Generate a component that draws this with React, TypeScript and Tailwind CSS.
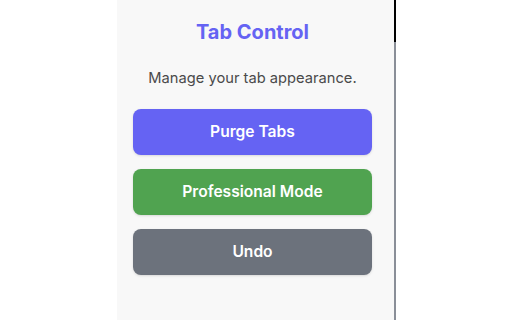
import React from 'react';

const buttons = [
    { label: 'Purge Tabs', className: 'bg-[#6563f3]' },
    { label: 'Professional Mode', className: 'bg-[#50a350]' },
    { label: 'Undo', className: 'bg-[#6c727c]' },
];

export default function App() {
    return (
        <div
            className="flex w-[512px] h-[320px] bg-white overflow-hidden"
            style={{ fontFamily: 'Inter, "Noto Sans", sans-serif' }}
        >
            <div className="w-[117px] shrink-0" />
            <div className="w-[277px] shrink-0 bg-[#f8f8f8] flex flex-col">
                <div className="w-[239px] ml-[16px] flex flex-col items-center">
                    <h1 className="mt-[19px] text-[20px] leading-[26px] font-bold text-[#6563f3]">
                        Tab Control
                    </h1>
                    <p className="mt-[23px] text-[14.7px] leading-[20px] text-[#4a4a4a]">
                        Manage your tab appearance.
                    </p>
                    <div className="mt-[21px] w-full flex flex-col gap-[14px]">
                        {buttons.map((b) => (
                            <button
                                key={b.label}
                                className={`h-[46px] w-full rounded-lg text-white text-[15.6px] font-semibold shadow-sm ${b.className}`}
                            >
                                {b.label}
                            </button>
                        ))}
                    </div>
                </div>
            </div>
            <div className="w-[2px] shrink-0 flex flex-col">
                <div className="h-[42px] bg-black" />
                <div className="flex-1 bg-[#8a8f98]" />
            </div>
        </div>
    );
}
